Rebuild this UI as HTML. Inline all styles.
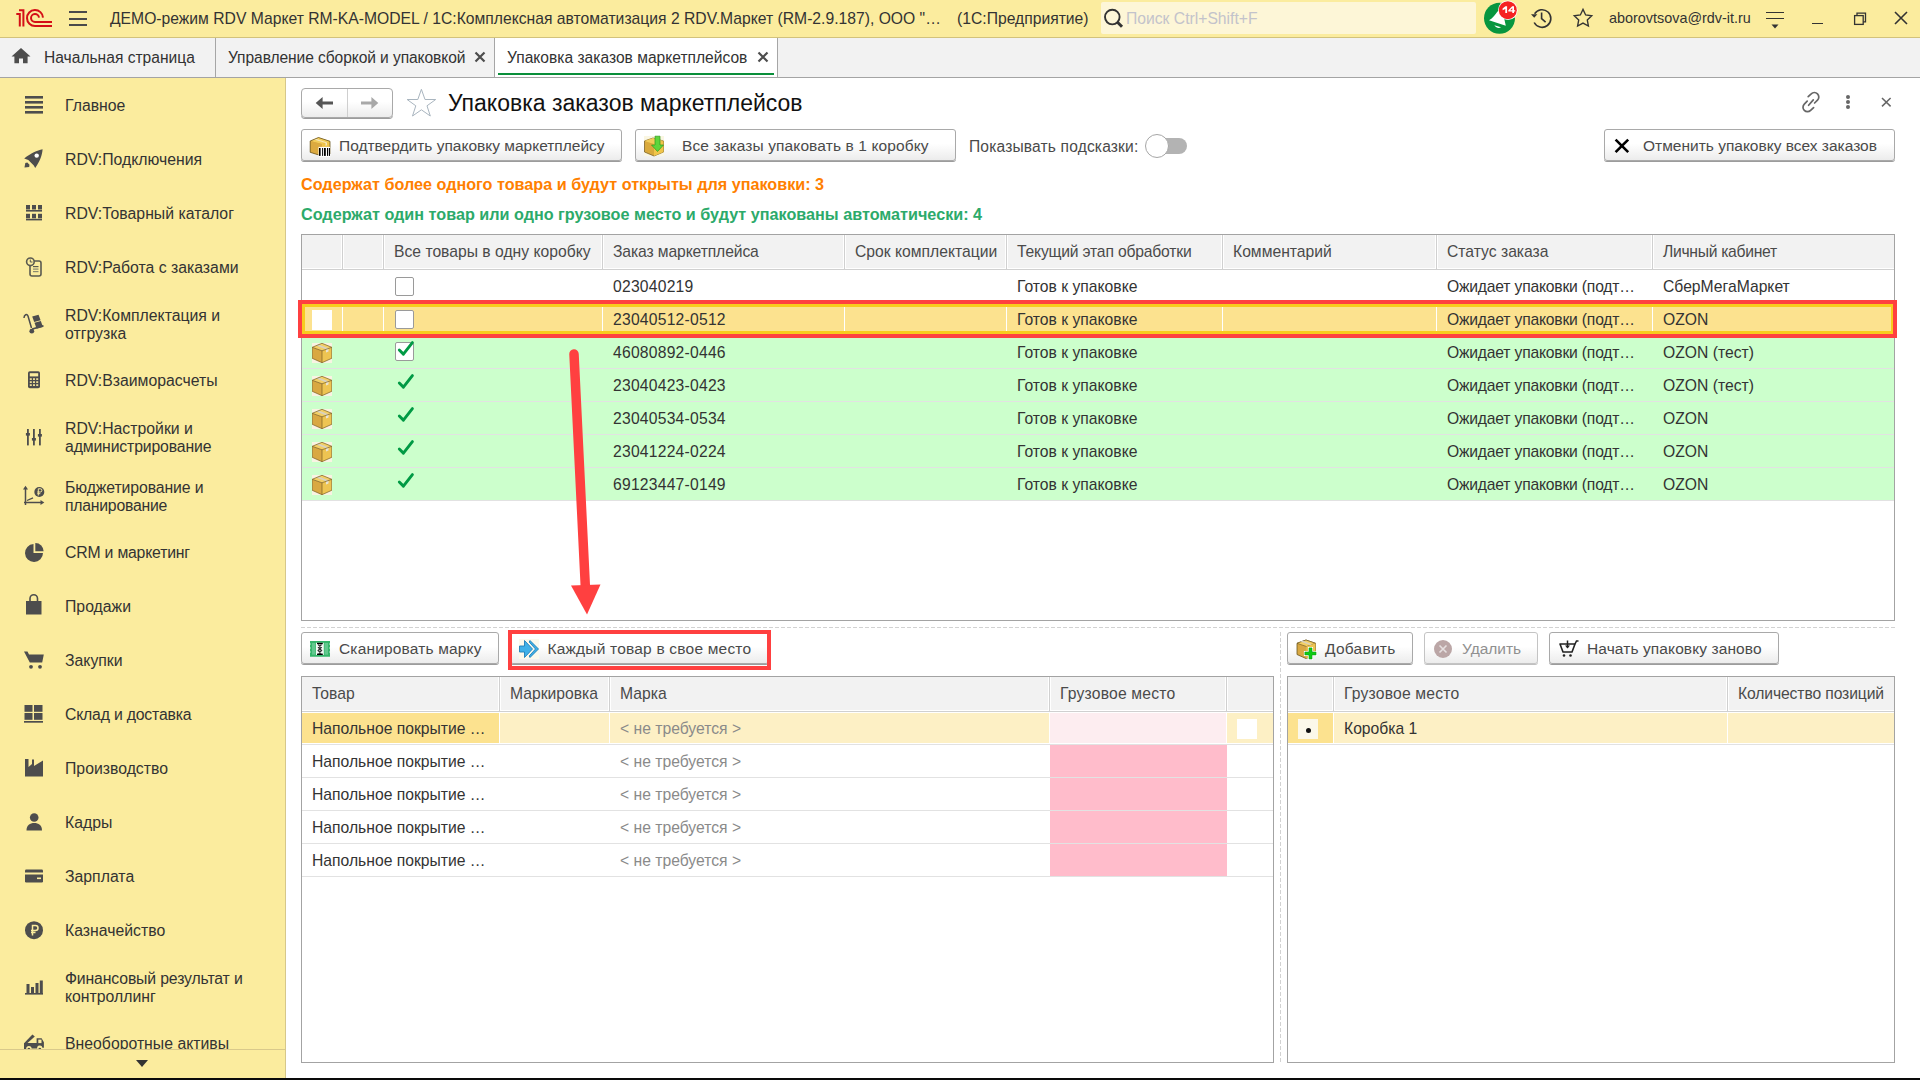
<!DOCTYPE html>
<html><head><meta charset="utf-8">
<style>
*{box-sizing:border-box;margin:0;padding:0}
html,body{width:1920px;height:1080px;overflow:hidden;background:#fff}
body{position:relative;font-family:"Liberation Sans",sans-serif;font-size:15.7px;color:#333}
.a{position:absolute}
.t{position:absolute;white-space:nowrap;line-height:18px;font-size:15.7px}
#top{left:0;top:0;width:1920px;height:38px;background:#FBEC9E;border-bottom:1px solid #D2C27C}
#tabs{left:0;top:38px;width:1920px;height:40px;background:#F2F2F2;border-bottom:1px solid #A4A4A4}
.tsep{position:absolute;top:38px;width:1px;height:39px;background:#A6A6A6}
#side{left:0;top:78px;width:286px;height:1000px;background:#FBEC9E;border-right:1px solid #D6C78A;overflow:hidden}
.si{position:absolute;left:65px;white-space:nowrap;line-height:18px;font-size:15.8px;color:#333}
.ic{position:absolute}
#blk{left:0;top:1078px;width:1920px;height:2px;background:#0a0a0a}
.btn{position:absolute;height:32px;border:1px solid #A9A9A9;border-radius:3px;background:linear-gradient(#fff 0%,#fff 45%,#ECECEC 100%);box-shadow:0 1px 0 #9C9C9C}
.btn .t{color:#4A4A4A}
.tbl{position:absolute;border:1px solid #A2A2A2;background:#fff;overflow:hidden}
.hd{position:absolute;background:#F2F2F2;border:1px solid #fff;border-right-color:#fff}
.vs{position:absolute;width:1px;background:#D0D0D0}
.hs{position:absolute;height:1px;background:#D0D0D0}
</style></head><body>

<!-- TOP BAR -->
<div id="top" class="a">
  <svg class="ic" style="left:0;top:0" width="60" height="38" viewBox="0 0 60 38">
    <g fill="none" stroke="#D40F17" stroke-width="2">
      <path d="M16.3 14 H19.8 V26.5"/>
      <path d="M19 10.2 H23.4 V26.5"/>
      <path d="M43 17.6 A8 8 0 1 0 35 26 H52"/>
      <path d="M39 17.6 A4 4 0 1 0 35 22 H52"/>
    </g>
  </svg>
  <div class="a" style="left:69px;top:11px;width:18px;height:2px;background:#4a4a4a"></div>
  <div class="a" style="left:69px;top:17.5px;width:18px;height:2px;background:#4a4a4a"></div>
  <div class="a" style="left:69px;top:24px;width:18px;height:2px;background:#4a4a4a"></div>
  <div class="t" style="left:110px;top:10px;color:#333">ДЕМО-режим RDV Маркет RM-KA-MODEL / 1С:Комплексная автоматизация 2 RDV.Маркет (RM-2.9.187), ООО "…</div>
  <div class="t" style="left:957px;top:10px;color:#333">(1С:Предприятие)</div>
  <div class="a" style="left:1101px;top:2px;width:375px;height:32px;background:#FDF6D7;border-radius:2px"></div>
  <svg class="ic" style="left:1100px;top:5px" width="26" height="26" viewBox="0 0 26 26">
    <circle cx="12.3" cy="12.1" r="7.3" fill="none" stroke="#333" stroke-width="1.9"/>
    <path d="M17.5 17.3 L22 21.8" stroke="#333" stroke-width="3"/>
  </svg>
  <div class="t" style="left:1126px;top:10px;color:#C3C3CB">Поиск Ctrl+Shift+F</div>
  <svg class="ic" style="left:1480px;top:0" width="40" height="38" viewBox="1480 0 40 38">
    <circle cx="1499.5" cy="18.3" r="15.5" fill="#07963F"/>
    <path d="M1489 20.3 C1493 18 1495 15 1497.5 11.5 L1506 8 L1504.3 19 L1505.8 25.7 Z" fill="#fff"/>
    <path d="M1494.3 25.2 L1501 27.3 C1499 28.4 1496.5 28.3 1494.3 25.2 Z" fill="#fff"/>
    <circle cx="1507.8" cy="10.2" r="9.8" fill="#fff"/>
    <circle cx="1507.8" cy="10.2" r="9" fill="#F52222"/>
    <path d="M1502.6 8.4 L1505.4 6.2 H1507.1 V12.9 H1505.3 V8.9 L1502.6 10.3 Z" fill="#fff"/><path fill-rule="evenodd" d="M1512.2 6.2 H1514 V10.3 H1515.2 V11.6 H1514 V12.9 H1512.3 V11.6 H1508.3 V10.3 Z M1512.3 10.3 V8 L1510.2 10.3 Z" fill="#fff"/>
  </svg>
  <svg class="ic" style="left:1525px;top:0" width="36" height="38" viewBox="1525 0 36 38">
    <path d="M1534.6 13.8 A8.8 8.8 0 1 1 1534.2 22.5" fill="none" stroke="#333" stroke-width="1.6"/>
    <path d="M1531 14.2 L1537.4 14.2 L1534.2 17.8 Z" fill="#333"/>
    <path d="M1541.6 12.5 V18.6 L1545.6 22.2" fill="none" stroke="#333" stroke-width="1.6"/>
  </svg>
  <svg class="ic" style="left:1570px;top:5px" width="26" height="26" viewBox="0 0 26 26">
    <path d="M13.00 4.40 L15.65 9.96 L21.75 10.76 L17.28 14.99 L18.41 21.04 L13.00 18.10 L7.59 21.04 L8.72 14.99 L4.25 10.76 L10.35 9.96 Z" fill="none" stroke="#333" stroke-width="1.35" stroke-linejoin="miter"/>
  </svg>
  <div class="t" style="left:1609px;top:9px;font-size:14.4px;color:#333">aborovtsova@rdv-it.ru</div>
  <div class="a" style="left:1766px;top:11.5px;width:18px;height:1.5px;background:#333"></div>
  <div class="a" style="left:1766px;top:17.8px;width:18px;height:1.5px;background:#333"></div>
  <svg class="ic" style="left:1770px;top:23.5px" width="10" height="6" viewBox="0 0 10 6"><path d="M1.5 0.5 H8.5 L5 4.5 Z" fill="#333"/></svg>
  <div class="a" style="left:1812px;top:22.5px;width:11px;height:1.6px;background:#333"></div>
  <svg class="ic" style="left:1850px;top:9px" width="20" height="20" viewBox="0 0 20 20">
    <rect x="4.6" y="6.6" width="8.6" height="8.8" fill="none" stroke="#333" stroke-width="1.3"/>
    <path d="M7 6.6 V4.2 H15.5 V12.8 H13.2" fill="none" stroke="#333" stroke-width="1.3"/>
  </svg>
  <svg class="ic" style="left:1890px;top:8px" width="22" height="22" viewBox="0 0 22 22">
    <path d="M5 4 L17 16 M17 4 L5 16" stroke="#333" stroke-width="1.6"/>
  </svg>
</div>

<!-- SIDEBAR -->
<div id="side" class="a"></div>
<div class="si" style="top:97px">Главное</div>
<div class="si" style="top:151px">RDV:Подключения</div>
<div class="si" style="top:205px">RDV:Товарный каталог</div>
<div class="si" style="top:259px">RDV:Работа с заказами</div>
<div class="si" style="top:307px">RDV:Комплектация и</div>
<div class="si" style="top:325px">отгрузка</div>
<div class="si" style="top:372px">RDV:Взаиморасчеты</div>
<div class="si" style="top:420px">RDV:Настройки и</div>
<div class="si" style="letter-spacing:-0.15px;top:438px">администрирование</div>
<div class="si" style="letter-spacing:-0.1px;top:479px">Бюджетирование и</div>
<div class="si" style="letter-spacing:-0.25px;top:497px">планирование</div>
<div class="si" style="letter-spacing:-0.2px;top:544px">CRM и маркетинг</div>
<div class="si" style="top:598px">Продажи</div>
<div class="si" style="top:652px">Закупки</div>
<div class="si" style="letter-spacing:-0.2px;top:706px">Склад и доставка</div>
<div class="si" style="top:760px">Производство</div>
<div class="si" style="top:814px">Кадры</div>
<div class="si" style="top:868px">Зарплата</div>
<div class="si" style="top:922px">Казначейство</div>
<div class="si" style="letter-spacing:-0.15px;top:970px">Финансовый результат и</div>
<div class="si" style="top:988px">контроллинг</div>
<div class="si" style="top:1035px">Внеоборотные активы</div>
<svg class="ic" style="left:0;top:78px" width="60" height="1000" viewBox="0 78 60 1000" fill="#4D4D4D">
  <!-- glavnoe -->
  <rect x="25" y="96" width="18" height="2.6"/><rect x="25" y="101" width="18" height="2.6"/><rect x="25" y="106" width="18" height="2.6"/><rect x="25" y="111" width="18" height="2.6"/>
  <!-- rocket -->
  <path d="M42.6 149.2 C37 150.5 31 153 24.2 158.4 L28.3 160.1 L33.8 165.6 L35.2 168 C40 161 42 156 42.6 149.2 Z"/>
  <circle cx="36.7" cy="155.6" r="2.2" fill="#fff"/>
  <path d="M24.5 167.5 L25.3 163 L27.3 162.6 L29.5 164.8 L29.2 166.9 Z"/>
  <!-- catalog -->
  <rect x="26" y="205" width="4" height="4.5"/><rect x="32" y="205" width="4" height="4.5"/><rect x="38" y="205" width="4" height="4.5"/>
  <rect x="26" y="210" width="16" height="1.6"/>
  <rect x="26" y="213.8" width="4" height="4.5"/><rect x="32" y="213.8" width="4" height="4.5"/><rect x="38" y="213.8" width="4" height="4.5"/>
  <rect x="26" y="218.8" width="16" height="1.6"/>
  <!-- orders -->
  <g fill="none" stroke="#5A5A50" stroke-width="1.6">
   <rect x="30" y="261" width="11" height="15" rx="2"/>
   <circle cx="30.4" cy="261.8" r="3.8" fill="#FBEC9E"/>
  </g>
  <path d="M30.3 259.5 V262 H32.5" fill="none" stroke="#5A5A50" stroke-width="1"/>
  <rect x="33" y="266" width="5.5" height="1.2" fill="#5A5A50"/><rect x="33" y="268.5" width="5.5" height="1.2" fill="#8A8A70"/><rect x="33" y="271" width="5.5" height="1.2" fill="#8A8A70"/>
  <!-- hand truck -->
  <path d="M24 318 C24 314.5 27 313.5 28 316 L31.5 328" fill="none" stroke="#4D4D4D" stroke-width="1.5"/>
  <circle cx="31.8" cy="331.2" r="2.4"/>
  <path d="M32 330 L43.8 326.5 L43.2 325 L32 328.2 Z"/>
  <path d="M32.2 316.5 L38.5 314.8 L40.6 320.3 L34.2 322 Z"/><path d="M34.5 322.8 L40.8 321 L43 327 L36.6 328.8 Z"/>
  <!-- calculator -->
  <rect x="28" y="371.3" width="12" height="17" rx="1.8"/>
  <rect x="29.8" y="373.2" width="8.4" height="3.2" fill="#FBEC9E"/>
  <g fill="#FBEC9E"><rect x="29.8" y="378.3" width="2" height="1.6"/><rect x="33" y="378.3" width="2" height="1.6"/><rect x="36.2" y="378.3" width="2" height="1.6"/>
  <rect x="29.8" y="381.3" width="2" height="1.6"/><rect x="33" y="381.3" width="2" height="1.6"/><rect x="36.2" y="381.3" width="2" height="1.6"/>
  <rect x="29.8" y="384.3" width="2" height="1.6"/><rect x="33" y="384.3" width="2" height="1.6"/><rect x="36.2" y="384.3" width="2" height="1.6"/></g>
  <!-- sliders -->
  <rect x="27" y="429" width="1.8" height="16.4"/><rect x="33" y="429" width="1.8" height="16.4"/><rect x="39" y="429" width="1.8" height="16.4"/>
  <rect x="25.9" y="433" width="4" height="2.6"/><rect x="31.9" y="438" width="4" height="2.6"/><rect x="37.9" y="434" width="4" height="2.6"/>
  <!-- budget -->
  <path d="M25.5 505 V487.5" stroke="#4D4D4D" stroke-width="1.5"/><path d="M23 489.5 L25.5 485.8 L28 489.5 Z"/>
  <path d="M24 502.5 H41" stroke="#4D4D4D" stroke-width="1.5"/><path d="M40.5 500 L44.3 502.5 L40.5 505 Z"/>
  <path d="M27 500.5 L33 497.8" stroke="#4D4D4D" stroke-width="1.3"/>
  <circle cx="39.3" cy="492" r="5"/>
  <path d="M38.3 495.5 V488.8 H40.3 A1.6 1.6 0 0 1 40.3 492 H37.3 M37.3 493.7 H40.3" fill="none" stroke="#FBEC9E" stroke-width="1"/>
  <!-- pie -->
  <path d="M33.5 544 A9 9 0 1 0 43 553 H33.5 Z"/>
  <path d="M35.3 543 A8.2 8.2 0 0 1 43.6 551.3 H35.3 Z"/>
  <!-- bag -->
  <path d="M26 601 H41.5 V614.5 H26 Z"/>
  <path d="M30 601 V598.5 A3.7 3.7 0 0 1 37.5 598.5 V601" fill="none" stroke="#4D4D4D" stroke-width="1.6"/>
  <!-- cart -->
  <path d="M24 651.5 H27.5 L29 654.5 H43.8 L42.2 662.5 H29.8 Z"/>
  <circle cx="31" cy="666.8" r="1.9"/><circle cx="40" cy="666.8" r="1.9"/>
  <!-- warehouse -->
  <rect x="24.5" y="705" width="8" height="6.8"/><rect x="34" y="705" width="8.5" height="6.8"/>
  <rect x="24.5" y="713" width="8" height="6.8"/><rect x="34" y="713" width="8.5" height="6.8"/>
  <rect x="24" y="721" width="19" height="1.7"/>
  <!-- factory -->
  <path d="M25 776.5 V759 H28.5 V767 L32 764 V759.5 H34 V766 L43 760.5 V776.5 Z"/>
  <!-- person -->
  <circle cx="34.2" cy="817.5" r="4.3"/>
  <path d="M26.5 830.5 C26.5 825 30 823 34.2 823 C38.5 823 42 825 42 830.5 Z"/>
  <!-- card -->
  <rect x="25" y="869.5" width="18" height="13" rx="1.2"/>
  <rect x="25" y="872.5" width="18" height="2" fill="#FBEC9E"/>
  <rect x="37" y="877.5" width="4" height="1.6" fill="#FBEC9E"/>
  <!-- ruble coin -->
  <circle cx="34" cy="930.2" r="9"/>
  <path d="M32.5 935.5 V925.5 H35.5 A2.5 2.5 0 0 1 35.5 930.5 H31 M31 932.5 H35.5" fill="none" stroke="#FBEC9E" stroke-width="1.5"/>
  <!-- bar chart -->
  <rect x="25" y="993" width="18" height="1.6"/>
  <rect x="26.5" y="984" width="3" height="9"/><rect x="31" y="987" width="3" height="6"/><rect x="35.5" y="983" width="3" height="10"/><rect x="39.8" y="980.5" width="3" height="12.5"/>
  <!-- truck -->
  <path d="M24 1049 V1043 H36.6 V1038.2 H41.6 L43.9 1042.2 V1047.8 H42.4 A2.6 2.6 0 0 0 37.2 1048.6 H31.6 A2.6 2.6 0 0 0 26.2 1048.6 V1049 Z"/>
  <rect x="38.3" y="1039.6" width="3.2" height="3.5" fill="#FBEC9E"/>
  <circle cx="28.9" cy="1049.2" r="1.5"/><circle cx="39.8" cy="1049.2" r="1.5"/>
  <path d="M24.3 1043 L32.4 1034.5 L34.8 1036.6 L27.2 1043.2 Z"/>
</svg>
<div class="a" style="left:0;top:1049px;width:285px;height:1px;background:#D9C98B"></div>
<div class="a" style="left:0;top:1050px;width:285px;height:28px;background:#FBEC9E"></div>
<svg class="ic" style="left:134px;top:1058px" width="16" height="12" viewBox="0 0 16 12"><path d="M2 2 H14 L8 9 Z" fill="#333"/></svg>
<div id="blk" class="a"></div>

<!-- TABS -->
<div id="tabs" class="a"></div>
<div class="tsep" style="left:215px"></div>
<div class="tsep" style="left:494px"></div>
<div class="tsep" style="left:777px"></div>
<div class="a" style="left:495px;top:38px;width:282px;height:39px;background:#fff"></div>
<div class="a" style="left:498px;top:73px;width:276px;height:2px;background:#0A8F3A"></div>

<svg class="ic" style="left:10px;top:46px" width="22" height="20" viewBox="0 0 22 20">
  <path d="M11 2 L20.5 10.6 H17.6 V17.2 H13 V12.4 H9 V17.2 H4.4 V10.6 H1.5 Z" fill="#4D4D4D"/>
</svg>
<div class="t" style="left:44px;top:49px;font-size:15.6px;color:#333">Начальная страница</div>
<div class="t" style="letter-spacing:-0.09px;left:228px;top:49px;font-size:15.6px;color:#333">Управление сборкой и упаковкой</div>
<svg class="ic" style="left:472px;top:49px" width="16" height="16" viewBox="0 0 16 16"><path d="M3.5 3.5 L12.5 12.5 M12.5 3.5 L3.5 12.5" stroke="#4D4D4D" stroke-width="2.2"/></svg>
<div class="t" style="left:507px;top:49px;font-size:15.6px;color:#333">Упаковка заказов маркетплейсов</div>
<svg class="ic" style="left:755px;top:49px" width="16" height="16" viewBox="0 0 16 16"><path d="M3.5 3.5 L12.5 12.5 M12.5 3.5 L3.5 12.5" stroke="#4D4D4D" stroke-width="2.2"/></svg>


<!-- FORM HEADER -->
<div class="btn" style="left:301px;top:88px;width:92px;height:30px;border-radius:4px"></div>
<div class="a" style="left:347px;top:89px;width:1px;height:28px;background:#CFCFCF"></div>
<svg class="ic" style="left:312px;top:93px" width="26" height="20" viewBox="0 0 26 20"><path d="M3.7 10 L10.6 4 V8.6 H21 V11.4 H10.6 V16 Z" fill="#555"/></svg>
<svg class="ic" style="left:356px;top:93px" width="26" height="20" viewBox="0 0 26 20"><path d="M22.3 10 L15.4 4 V8.6 H5 V11.4 H15.4 V16 Z" fill="#A8A8A8"/></svg>
<svg class="ic" style="left:404px;top:86px" width="34" height="34" viewBox="0 0 34 34">
  <path d="M17.4 3.3 L21 13.5 L31.7 13.5 L23 19.8 L26.3 30 L17.4 23.8 L8.5 30 L11.8 19.8 L3.1 13.5 L13.8 13.5 Z" fill="none" stroke="#A9B5BF" stroke-width="1"/>
</svg>
<div class="t" style="left:448px;top:90px;font-size:23px;line-height:26px;color:#111">Упаковка заказов маркетплейсов</div>
<svg class="ic" style="left:1798px;top:89px" width="26" height="26" viewBox="0 0 26 26">
  <g fill="none" stroke="#666" stroke-width="1.7" stroke-linecap="round">
    <path d="M10.2 7.6 L13.2 4.8 A3.9 3.9 0 0 1 19.5 11.1 L16.6 14"/>
    <path d="M15.6 18.6 L12.6 21.4 A3.9 3.9 0 0 1 6.3 15.1 L9.2 12.2"/>
    <path d="M10.6 16.3 L15.3 10.9"/>
  </g>
</svg>
<div class="a" style="left:1846px;top:94.5px;width:4px;height:4px;border-radius:50%;background:#666"></div>
<div class="a" style="left:1846px;top:99.5px;width:4px;height:4px;border-radius:50%;background:#666"></div>
<div class="a" style="left:1846px;top:104.5px;width:4px;height:4px;border-radius:50%;background:#666"></div>
<svg class="ic" style="left:1878px;top:94px" width="16" height="16" viewBox="0 0 16 16"><path d="M4 4 L12.6 12.4 M12.6 4 L4 12.4" stroke="#666" stroke-width="1.5"/></svg>

<!-- BUTTON ROW -->
<div class="btn" style="left:301px;top:129px;width:321px;height:32px">
  <div class="t" style="left:37px;top:7px;font-size:15.5px">Подтвердить упаковку маркетплейсу</div>
</div>
<svg class="ic" style="left:309px;top:135px" width="22" height="22" viewBox="0 0 22 22">
  <path d="M1.2 6 L9.5 2.5 L21 6.3 V19 L13 21 L1.2 17.3 Z" fill="#D9A93C"/>
  <path d="M1.2 6 L9.5 2.5 L21 6.3 L13 9 Z" fill="#F2CC5A"/>
  <path d="M13 9 L21 6.3 V19 L13 21 Z" fill="#F0C54A"/>
  <path d="M1.2 6 L13 9 V21 L1.2 17.3 Z" fill="#DCAA40"/>
  <path d="M5 4.5 L16.5 8 V11 L18 10.3 V7.5 L6.8 3.8 Z" fill="#F4E6B8"/>
  <path d="M1.2 6 L9.5 2.5 L21 6.3 V19 L13 21 L1.2 17.3 Z" fill="none" stroke="#6B5520" stroke-width="0.8"/>
  <rect x="9.5" y="11.9" width="11.7" height="10" fill="#fff"/>
  <rect x="10" y="13" width="1.6" height="7.9" fill="#000"/><rect x="13" y="13" width="0.9" height="7.9" fill="#000"/><rect x="14.9" y="13" width="1.9" height="7.9" fill="#000"/><rect x="18" y="13" width="1.1" height="7.9" fill="#000"/><rect x="19.9" y="13" width="1.1" height="7.9" fill="#000"/>
</svg>
<div class="btn" style="left:635px;top:129px;width:321px;height:32px">
  <div class="t" style="letter-spacing:0.12px;left:46px;top:7px;font-size:15.5px">Все заказы упаковать в 1 коробку</div>
</div>
<svg class="ic" style="left:643px;top:135px" width="22" height="22" viewBox="0 0 22 22">
  <rect x="1" y="1" width="20" height="20" fill="#FAF6E2"/>
  <path d="M1.5 6 L10 3 L20.5 6 V17 L11 21 L1.5 17 Z" fill="#D9A93C" stroke="#6B5520" stroke-width="0.7"/>
  <path d="M1.5 6 L10 3 L20.5 6 L11 9 Z" fill="#F2CC5A"/>
  <path d="M11 9 L20.5 6 V17 L11 21 Z" fill="#F0C54A"/>
  <path d="M12 1.2 H17 V10 H20.5 L14.5 16.5 L8.5 10 H12 Z" fill="#5FD53C" stroke="#2E9A1E" stroke-width="0.7"/>
</svg>
<div class="t" style="letter-spacing:0.15px;left:969px;top:138px;color:#4A4A4A;font-size:15.6px">Показывать подсказки:</div>
<div class="a" style="left:1147px;top:138px;width:40px;height:16px;border-radius:8px;background:#B3B3B3"></div>
<div class="a" style="left:1145px;top:134px;width:24px;height:24px;border-radius:50%;background:#fff;border:1px solid #A6A6A6"></div>
<div class="btn" style="left:1604px;top:129px;width:291px;height:32px">
  <div class="t" style="left:38px;top:7px;font-size:15.5px">Отменить упаковку всех заказов</div>
</div>
<svg class="ic" style="left:1612px;top:136px" width="20" height="20" viewBox="0 0 20 20"><path d="M3.6 3.6 L16.2 16.2 M16.2 3.6 L3.6 16.2" stroke="#000" stroke-width="2.6"/></svg>

<div class="t" style="left:301px;top:175px;font-size:16.2px;font-weight:bold;color:#FF8000">Содержат более одного товара и будут открыты для упаковки: 3</div>
<div class="t" style="left:301px;top:205px;font-size:16.2px;font-weight:bold;color:#2CAA6A">Содержат один товар или одно грузовое место и будут упакованы автоматически: 4</div>


<svg width="0" height="0" style="position:absolute">
 <defs>
  <g id="box">
   <rect x="0" y="0" width="20" height="20" fill="#F9F3E3"/>
   <path d="M10 0.3 L19.8 4.3 L10 7.8 L0.2 4.3 Z" fill="#F3CF66"/>
   <path d="M0.2 4.3 L10 7.8 V19.7 L0.2 15.3 Z" fill="#D9A842"/>
   <path d="M10 7.8 L19.8 4.3 V15.3 L10 19.7 Z" fill="#EEC452"/>
   <path d="M4 2.6 L14 6.2 L16.5 5.3 L6.5 1.6 Z" fill="#D8D2C0"/>
   <path d="M14 6.2 V9.5 L16.5 8.6 V5.3 Z" fill="#E9E4D6"/>
   <path d="M10 0.3 L19.8 4.3 V15.3 L10 19.7 L0.2 15.3 V4.3 Z M0.2 4.3 L10 7.8 L19.8 4.3 M10 7.8 V19.7" fill="none" stroke="#7A5E22" stroke-width="0.7"/>
  </g>
  <g id="chk"><path d="M4.3 6.2 L8.4 10.3 L17.4 -1.2" fill="none" stroke="#009A44" stroke-width="2.9" stroke-linecap="round" stroke-linejoin="round"/></g>
 </defs>
</svg>

<!-- TABLE 1 -->
<div class="a" style="left:301px;top:234px;width:1594px;height:387px;border:1px solid #A3A3A3;background:#fff"></div>
<div class="a" style="left:302px;top:235px;width:1592px;height:34px;background:#F2F2F2"></div>
<div class="a" style="left:302px;top:268px;width:1592px;height:1px;background:#fff"></div>
<div class="a" style="left:302px;top:269px;width:1592px;height:1px;background:#D0D0D0"></div>
<div class="a" style="left:341px;top:235px;width:3px;height:34px;background:#fff"></div>
<div class="a" style="left:342px;top:235px;width:1px;height:34px;background:#D0D0D0"></div>
<div class="a" style="left:382px;top:235px;width:3px;height:34px;background:#fff"></div>
<div class="a" style="left:383px;top:235px;width:1px;height:34px;background:#D0D0D0"></div>
<div class="a" style="left:601px;top:235px;width:3px;height:34px;background:#fff"></div>
<div class="a" style="left:602px;top:235px;width:1px;height:34px;background:#D0D0D0"></div>
<div class="a" style="left:843px;top:235px;width:3px;height:34px;background:#fff"></div>
<div class="a" style="left:844px;top:235px;width:1px;height:34px;background:#D0D0D0"></div>
<div class="a" style="left:1005px;top:235px;width:3px;height:34px;background:#fff"></div>
<div class="a" style="left:1006px;top:235px;width:1px;height:34px;background:#D0D0D0"></div>
<div class="a" style="left:1221px;top:235px;width:3px;height:34px;background:#fff"></div>
<div class="a" style="left:1222px;top:235px;width:1px;height:34px;background:#D0D0D0"></div>
<div class="a" style="left:1435px;top:235px;width:3px;height:34px;background:#fff"></div>
<div class="a" style="left:1436px;top:235px;width:1px;height:34px;background:#D0D0D0"></div>
<div class="a" style="left:1651px;top:235px;width:3px;height:34px;background:#fff"></div>
<div class="a" style="left:1652px;top:235px;width:1px;height:34px;background:#D0D0D0"></div>
<div class="t" style="left:394px;top:243px;color:#4A4A4A">Все товары в одну коробку</div>
<div class="t" style="letter-spacing:-0.12px;left:613px;top:243px;color:#4A4A4A">Заказ маркетплейса</div>
<div class="t" style="left:855px;top:243px;color:#4A4A4A">Срок комплектации</div>
<div class="t" style="letter-spacing:-0.19px;left:1017px;top:243px;color:#4A4A4A">Текущий этап обработки</div>
<div class="t" style="left:1233px;top:243px;color:#4A4A4A">Комментарий</div>
<div class="t" style="left:1447px;top:243px;color:#4A4A4A">Статус заказа</div>
<div class="t" style="letter-spacing:-0.3px;left:1663px;top:243px;color:#4A4A4A">Личный кабинет</div>
<div class="a" style="left:302px;top:302px;width:1592px;height:1px;background:#E2E2E2"></div>
<div class="a" style="left:395px;top:277px;width:19px;height:19px;border:1px solid #9A9A9A;border-radius:2px;background:#fff"></div>
<div class="t" style="letter-spacing:0.22px;left:613px;top:278px">023040219</div>
<div class="t" style="left:1017px;top:278px">Готов к упаковке</div>
<div class="t" style="letter-spacing:-0.2px;left:1447px;top:278px">Ожидает упаковки (подт…</div>
<div class="t" style="left:1663px;top:278px">СберМегаМаркет</div>
<div class="a" style="left:302px;top:304px;width:1592px;height:31px;background:#F8CB1D"></div>
<div class="a" style="left:305px;top:307px;width:1586px;height:24px;background:#FCE28F"></div>
<div class="a" style="left:342px;top:307px;width:1px;height:24px;background:#fff"></div>
<div class="a" style="left:383px;top:307px;width:1px;height:24px;background:#fff"></div>
<div class="a" style="left:602px;top:307px;width:1px;height:24px;background:#fff"></div>
<div class="a" style="left:844px;top:307px;width:1px;height:24px;background:#fff"></div>
<div class="a" style="left:1006px;top:307px;width:1px;height:24px;background:#fff"></div>
<div class="a" style="left:1222px;top:307px;width:1px;height:24px;background:#fff"></div>
<div class="a" style="left:1436px;top:307px;width:1px;height:24px;background:#fff"></div>
<div class="a" style="left:1652px;top:307px;width:1px;height:24px;background:#fff"></div>
<div class="a" style="left:312px;top:310px;width:20px;height:20px;background:#fff"></div>
<div class="a" style="left:395px;top:310px;width:19px;height:19px;border:1px solid #9A9A9A;border-radius:2px;background:#fff"></div>
<div class="t" style="letter-spacing:0.22px;left:613px;top:311px">23040512-0512</div>
<div class="t" style="left:1017px;top:311px">Готов к упаковке</div>
<div class="t" style="letter-spacing:-0.2px;left:1447px;top:311px">Ожидает упаковки (подт…</div>
<div class="t" style="left:1663px;top:311px">OZON</div>
<div class="a" style="left:302px;top:336px;width:1592px;height:32px;background:#CCFFCC"></div>
<div class="a" style="left:302px;top:368px;width:1592px;height:1px;background:#E2E2E2"></div>
<svg class="ic" style="left:312px;top:343px" width="20" height="20"><use href="#box"/></svg>
<div class="a" style="left:395px;top:342px;width:19px;height:19px;border:1px solid #9A9A9A;border-radius:2px;background:#fff"></div>
<svg class="ic" style="left:395px;top:342px" width="20" height="16" viewBox="0 -1.8 20 16" overflow="visible"><use href="#chk"/></svg>
<div class="t" style="letter-spacing:0.22px;left:613px;top:344px">46080892-0446</div>
<div class="t" style="left:1017px;top:344px">Готов к упаковке</div>
<div class="t" style="letter-spacing:-0.2px;left:1447px;top:344px">Ожидает упаковки (подт…</div>
<div class="t" style="left:1663px;top:344px">OZON (тест)</div>
<div class="a" style="left:302px;top:369px;width:1592px;height:32px;background:#CCFFCC"></div>
<div class="a" style="left:302px;top:401px;width:1592px;height:1px;background:#E2E2E2"></div>
<svg class="ic" style="left:312px;top:376px" width="20" height="20"><use href="#box"/></svg>
<svg class="ic" style="left:395px;top:375px" width="20" height="16" viewBox="0 -1.8 20 16" overflow="visible"><use href="#chk"/></svg>
<div class="t" style="letter-spacing:0.22px;left:613px;top:377px">23040423-0423</div>
<div class="t" style="left:1017px;top:377px">Готов к упаковке</div>
<div class="t" style="letter-spacing:-0.2px;left:1447px;top:377px">Ожидает упаковки (подт…</div>
<div class="t" style="left:1663px;top:377px">OZON (тест)</div>
<div class="a" style="left:302px;top:402px;width:1592px;height:32px;background:#CCFFCC"></div>
<div class="a" style="left:302px;top:434px;width:1592px;height:1px;background:#E2E2E2"></div>
<svg class="ic" style="left:312px;top:409px" width="20" height="20"><use href="#box"/></svg>
<svg class="ic" style="left:395px;top:408px" width="20" height="16" viewBox="0 -1.8 20 16" overflow="visible"><use href="#chk"/></svg>
<div class="t" style="letter-spacing:0.22px;left:613px;top:410px">23040534-0534</div>
<div class="t" style="left:1017px;top:410px">Готов к упаковке</div>
<div class="t" style="letter-spacing:-0.2px;left:1447px;top:410px">Ожидает упаковки (подт…</div>
<div class="t" style="left:1663px;top:410px">OZON</div>
<div class="a" style="left:302px;top:435px;width:1592px;height:32px;background:#CCFFCC"></div>
<div class="a" style="left:302px;top:467px;width:1592px;height:1px;background:#E2E2E2"></div>
<svg class="ic" style="left:312px;top:442px" width="20" height="20"><use href="#box"/></svg>
<svg class="ic" style="left:395px;top:441px" width="20" height="16" viewBox="0 -1.8 20 16" overflow="visible"><use href="#chk"/></svg>
<div class="t" style="letter-spacing:0.22px;left:613px;top:443px">23041224-0224</div>
<div class="t" style="left:1017px;top:443px">Готов к упаковке</div>
<div class="t" style="letter-spacing:-0.2px;left:1447px;top:443px">Ожидает упаковки (подт…</div>
<div class="t" style="left:1663px;top:443px">OZON</div>
<div class="a" style="left:302px;top:468px;width:1592px;height:32px;background:#CCFFCC"></div>
<div class="a" style="left:302px;top:500px;width:1592px;height:1px;background:#E2E2E2"></div>
<svg class="ic" style="left:312px;top:475px" width="20" height="20"><use href="#box"/></svg>
<svg class="ic" style="left:395px;top:474px" width="20" height="16" viewBox="0 -1.8 20 16" overflow="visible"><use href="#chk"/></svg>
<div class="t" style="letter-spacing:0.22px;left:613px;top:476px">69123447-0149</div>
<div class="t" style="left:1017px;top:476px">Готов к упаковке</div>
<div class="t" style="letter-spacing:-0.2px;left:1447px;top:476px">Ожидает упаковки (подт…</div>
<div class="t" style="left:1663px;top:476px">OZON</div>
<div class="a" style="left:298px;top:300px;width:1599px;height:38px;border:4px solid #FF4040"></div>


<!-- LOWER -->
<div class="a" style="left:301px;top:627px;width:1594px;height:1px;background:repeating-linear-gradient(90deg,#D2D2D2 0 4px,transparent 4px 6px)"></div>
<div class="a" style="left:1280px;top:632px;width:1px;height:430px;background:repeating-linear-gradient(180deg,#D2D2D2 0 4px,transparent 4px 6px)"></div>
<div class="btn" style="left:301px;top:632px;width:198px;height:32px"><div class="t" style="letter-spacing:0.16px;left:37px;top:7px;font-size:15.5px">Сканировать марку</div></div>
<svg class="ic" style="left:310px;top:641px" width="20" height="16" viewBox="0 0 20 16">
 <path d="M0 0 H20 V2 L19.3 3 L20 4 V6 L19.3 7 L20 8 V10 L19.3 11 L20 12 V15.7 H0 V12 L0.7 11 L0 10 V8 L0.7 7 L0 6 V4 L0.7 3 L0 2 Z" fill="#34B56A"/>
 <rect x="2" y="2" width="3.5" height="11.7" fill="#62C88E"/><rect x="14.5" y="2" width="3.5" height="11.7" fill="#62C88E"/>
 <rect x="6" y="1.8" width="7.8" height="12.2" fill="#F4FBF6"/>
 <rect x="7" y="1.8" width="5.8" height="1.4" fill="#000"/><rect x="7" y="12.6" width="5.8" height="1.4" fill="#000"/>
 <path d="M8.2 3.5 L11.2 6.5 L8.2 9.5 L11.2 12.5 M11.5 3.5 L8.5 6.5 L11.5 9.5 L8.5 12.5" fill="none" stroke="#333" stroke-width="1.3"/>
</svg>
<div class="btn" style="left:510px;top:632px;width:259px;height:32px"><div class="t" style="letter-spacing:0.2px;left:36.5px;top:7px;font-size:15.5px">Каждый товар в свое место</div></div>
<svg class="ic" style="left:519px;top:639px" width="20" height="20" viewBox="0 0 20 20">
 <rect x="0" y="0" width="20" height="20" fill="#FBF9EC"/>
 <path d="M0.5 7 H5.5 V1.5 L13.5 10 L5.5 18.5 V13 H0.5 Z" fill="#3FB0E8" stroke="#1E7FB8" stroke-width="0.9" stroke-linejoin="round"/>
 <path d="M11 1.5 L19.5 10 L11 18.5 L10.2 17 L16.5 10 L10.2 3 Z" fill="#3FB0E8" stroke="#1E7FB8" stroke-width="0.9" stroke-linejoin="round"/>
</svg>
<div class="a" style="left:508px;top:630px;width:263px;height:40px;border:4px solid #FF4040"></div>
<div class="btn" style="left:1287px;top:632px;width:126px;height:32px"><div class="t" style="letter-spacing:0.25px;left:37px;top:7px;font-size:15.5px">Добавить</div></div>
<svg class="ic" style="left:1296px;top:639px;overflow:visible" width="20" height="20" viewBox="0 0 20 20">
 <path d="M1 4.3 L10 1 L19.5 4.3 V15.5 L10 19.5 L1 15.5 Z" fill="#D9A842" stroke="#6B5520" stroke-width="0.8"/>
 <path d="M1 4.3 L10 1 L19.5 4.3 L10.5 7.5 Z" fill="#F3CF66" stroke="#6B5520" stroke-width="0.6"/>
 <path d="M10.5 7.5 L19.5 4.3 V15.5 L10.5 19.5 Z" fill="#EEC452"/>
 <path d="M4.5 2.6 L14 6 L16 5.3 L6.5 1.8 Z" fill="#D8D2C0"/>
 <path d="M8.9 13 H13 V8.9 H16 V13 H20 V15.9 H16 V19.9 H13 V15.9 H8.9 Z" fill="none" stroke="#fff" stroke-width="2"/><path d="M8.9 13 H13 V8.9 H16 V13 H20 V15.9 H16 V19.9 H13 V15.9 H8.9 Z" fill="#0FCC14" stroke="#119A18" stroke-width="0.6"/>
</svg>
<div class="btn" style="left:1424px;top:632px;width:114px;height:32px;border-color:#C4C4C4;box-shadow:0 1px 0 #C0C0C0"><div class="t" style="left:37px;top:7px;font-size:15.5px;color:#909090">Удалить</div></div>
<svg class="ic" style="left:1433px;top:639px" width="20" height="20" viewBox="0 0 20 20">
 <circle cx="10" cy="10" r="9" fill="#BBA6A6"/>
 <path d="M6.5 6.5 L13.5 13.5 M13.5 6.5 L6.5 13.5" stroke="#E6E0E0" stroke-width="1.6"/>
</svg>
<div class="btn" style="left:1549px;top:632px;width:230px;height:32px"><div class="t" style="letter-spacing:0.1px;left:37px;top:7px;font-size:15.5px">Начать упаковку заново</div></div>
<svg class="ic" style="left:1558px;top:639px" width="22" height="20" viewBox="0 0 22 20">
 <path d="M2 5 H17 L14 13 H5 Z" fill="none" stroke="#222" stroke-width="1.6" stroke-linejoin="round"/>
 <path d="M17 5 L18.5 2 H20.5" fill="none" stroke="#222" stroke-width="1.6"/>
 <path d="M9.5 1.5 V8.5" stroke="#222" stroke-width="1.5"/><path d="M7 6.5 L9.5 9.5 L12 6.5 Z" fill="#222"/>
 <circle cx="6" cy="16.5" r="1.3" fill="#222"/><circle cx="12.5" cy="16.5" r="1.3" fill="#222"/>
</svg>
<div class="a" style="left:301px;top:676px;width:973px;height:387px;border:1px solid #A3A3A3;background:#fff"></div>
<div class="a" style="left:302px;top:677px;width:971px;height:34px;background:#F2F2F2"></div>
<div class="a" style="left:302px;top:710px;width:971px;height:1px;background:#fff"></div>
<div class="a" style="left:302px;top:711px;width:971px;height:1px;background:#D0D0D0"></div>
<div class="a" style="left:498px;top:677px;width:3px;height:34px;background:#fff"></div>
<div class="a" style="left:499px;top:677px;width:1px;height:34px;background:#D0D0D0"></div>
<div class="a" style="left:608px;top:677px;width:3px;height:34px;background:#fff"></div>
<div class="a" style="left:609px;top:677px;width:1px;height:34px;background:#D0D0D0"></div>
<div class="a" style="left:1048px;top:677px;width:3px;height:34px;background:#fff"></div>
<div class="a" style="left:1049px;top:677px;width:1px;height:34px;background:#D0D0D0"></div>
<div class="a" style="left:1225px;top:677px;width:3px;height:34px;background:#fff"></div>
<div class="a" style="left:1226px;top:677px;width:1px;height:34px;background:#D0D0D0"></div>
<div class="t" style="left:312px;top:685px;color:#4A4A4A">Товар</div>
<div class="t" style="left:510px;top:685px;color:#4A4A4A">Маркировка</div>
<div class="t" style="left:620px;top:685px;color:#4A4A4A">Марка</div>
<div class="t" style="letter-spacing:0.18px;left:1060px;top:685px;color:#4A4A4A">Грузовое место</div>
<div class="a" style="left:302px;top:744px;width:971px;height:1px;background:#E2E2E2"></div>
<div class="a" style="left:302px;top:713px;width:197px;height:30px;background:#FCE28F"></div>
<div class="a" style="left:500px;top:713px;width:109px;height:30px;background:#FDF0C5"></div>
<div class="a" style="left:610px;top:713px;width:439px;height:30px;background:#FDF0C5"></div>
<div class="a" style="left:1050px;top:713px;width:176px;height:30px;background:#FDEDF0"></div>
<div class="a" style="left:1227px;top:713px;width:46px;height:30px;background:#FDF0C5"></div>
<div class="a" style="left:1237px;top:719px;width:20px;height:20px;background:#fff"></div>
<div class="t" style="left:312px;top:720px">Напольное покрытие …</div>
<div class="t" style="left:620px;top:720px;color:#8A8A8A">&lt; не требуется &gt;</div>
<div class="a" style="left:302px;top:777px;width:971px;height:1px;background:#E2E2E2"></div>
<div class="a" style="left:1050px;top:745px;width:177px;height:32px;background:#FFBCCB"></div>
<div class="t" style="left:312px;top:753px">Напольное покрытие …</div>
<div class="t" style="left:620px;top:753px;color:#8A8A8A">&lt; не требуется &gt;</div>
<div class="a" style="left:302px;top:810px;width:971px;height:1px;background:#E2E2E2"></div>
<div class="a" style="left:1050px;top:778px;width:177px;height:32px;background:#FFBCCB"></div>
<div class="t" style="left:312px;top:786px">Напольное покрытие …</div>
<div class="t" style="left:620px;top:786px;color:#8A8A8A">&lt; не требуется &gt;</div>
<div class="a" style="left:302px;top:843px;width:971px;height:1px;background:#E2E2E2"></div>
<div class="a" style="left:1050px;top:811px;width:177px;height:32px;background:#FFBCCB"></div>
<div class="t" style="left:312px;top:819px">Напольное покрытие …</div>
<div class="t" style="left:620px;top:819px;color:#8A8A8A">&lt; не требуется &gt;</div>
<div class="a" style="left:302px;top:876px;width:971px;height:1px;background:#E2E2E2"></div>
<div class="a" style="left:1050px;top:844px;width:177px;height:32px;background:#FFBCCB"></div>
<div class="t" style="left:312px;top:852px">Напольное покрытие …</div>
<div class="t" style="left:620px;top:852px;color:#8A8A8A">&lt; не требуется &gt;</div>
<div class="a" style="left:1287px;top:676px;width:608px;height:387px;border:1px solid #A3A3A3;background:#fff"></div>
<div class="a" style="left:1288px;top:677px;width:606px;height:34px;background:#F2F2F2"></div>
<div class="a" style="left:1288px;top:710px;width:606px;height:1px;background:#fff"></div>
<div class="a" style="left:1288px;top:711px;width:606px;height:1px;background:#D0D0D0"></div>
<div class="a" style="left:1332px;top:677px;width:3px;height:34px;background:#fff"></div>
<div class="a" style="left:1333px;top:677px;width:1px;height:34px;background:#D0D0D0"></div>
<div class="a" style="left:1726px;top:677px;width:3px;height:34px;background:#fff"></div>
<div class="a" style="left:1727px;top:677px;width:1px;height:34px;background:#D0D0D0"></div>
<div class="t" style="letter-spacing:0.18px;left:1344px;top:685px;color:#4A4A4A">Грузовое место</div>
<div class="t" style="letter-spacing:-0.12px;left:1738px;top:685px;color:#4A4A4A">Количество позиций</div>
<div class="a" style="left:1288px;top:744px;width:606px;height:1px;background:#E2E2E2"></div>
<div class="a" style="left:1288px;top:713px;width:45px;height:30px;background:#FCE28F"></div>
<div class="a" style="left:1334px;top:713px;width:393px;height:30px;background:#FDF0C5"></div>
<div class="a" style="left:1728px;top:713px;width:166px;height:30px;background:#FDF0C5"></div>
<div class="a" style="left:1298px;top:719px;width:20px;height:20px;background:#FBF8EA"></div>
<div class="a" style="left:1305.5px;top:727.5px;width:5px;height:5px;border-radius:50%;background:#111"></div>
<div class="t" style="left:1344px;top:720px">Коробка 1</div>
<svg class="ic" style="left:0;top:0;pointer-events:none" width="1920" height="1080" viewBox="0 0 1920 1080">
 <path d="M574 354 L585.5 590" stroke="#FF4040" stroke-width="9.5" stroke-linecap="round"/>
 <path d="M571 585.5 L600.5 584.5 L587 614.5 Z" fill="#FF4040"/>
</svg>
</body></html>
